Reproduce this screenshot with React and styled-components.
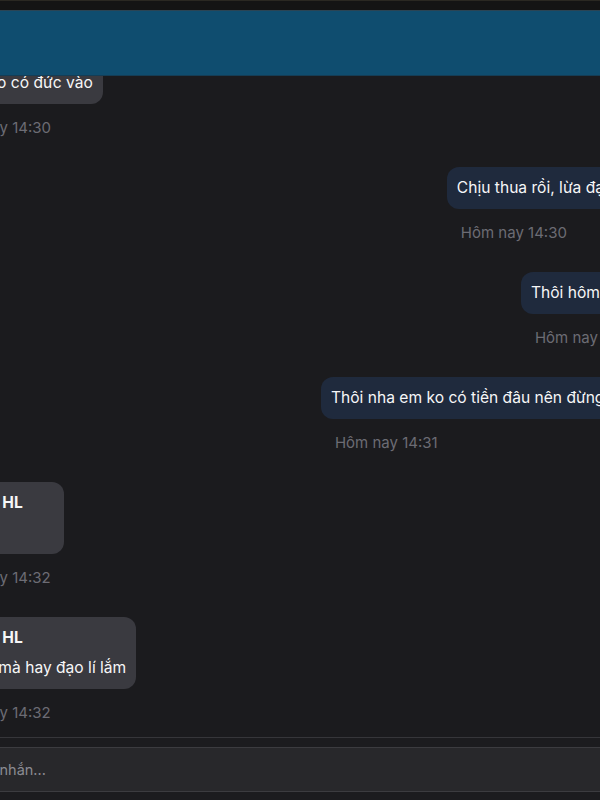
import React from 'react';
import styled, {createGlobalStyle} from 'styled-components';

const GlobalStyle = createGlobalStyle`
html, body {
    margin: 0;
    padding: 0;
    background: #1b1b1e;
    overflow: hidden;
}
body {
    font-family: Inter, "Noto Sans", sans-serif;
}
`;

const Panel = styled.div`
display: flex;
flex-direction: column;
width: 760px;
height: 800px;
margin-left: -85px;
background: #1b1b1e;
`;

const TopStrip = styled.div`
height: 10px;
background: #141414;
border-top: 1px solid #2a2822;
box-sizing: border-box;
`;

const Header = styled.header`
height: 66px;
flex-shrink: 0;
background: #0f4d6f;
border-top: 1px solid #2a4454;
border-bottom: 1px solid #153d55;
box-sizing: border-box;
`;

const MessageList = styled.div`
flex: 1;
min-height: 0;
overflow: hidden;
display: flex;
flex-direction: column;
justify-content: flex-end;
gap: 28.5px;
padding: 0 34px 14px 16px;
`;

const Group = styled.div`
display: flex;
flex-direction: column;
align-items: flex-start;
align-self: ${({ $mine }) => ($mine ? 'flex-end' : 'flex-start')};
flex-shrink: 0;
`;

const Bubble = styled.div`
background: ${({ $mine }) => ($mine ? '#1f2a3d' : '#3a3a40')};
color: #f6f6f7;
border-radius: 12px;
padding: 10px 10px;
font-size: 15.6px;
line-height: 22.5px;
min-width: ${({ $minWidth }) => ($minWidth ? `${$minWidth}px` : '0')};
box-sizing: border-box;
white-space: nowrap;
`;

const Name = styled.div`
font-weight: 700;
line-height: 22.5px;
margin-bottom: 7.5px;
margin-left: -2px;
`;

const Text = styled.div`
min-height: 22.5px;
`;

const Time = styled.div`
margin: 14px 0 0 14px;
font-size: 15px;
line-height: 20px;
color: #6c6c74;
`;

const Composer = styled.div`
flex-shrink: 0;
border-top: 1px solid #36363a;
background: #1c1c1f;
padding: 9px 12px 8px 12px;
`;

const Input = styled.input`
display: block;
width: 100%;
box-sizing: border-box;
height: 45px;
background: #28282b;
border: 1px solid #3c3c40;
border-radius: 6px;
padding: 0 12px 0 10px;
font-family: Inter, "Noto Sans", sans-serif;
font-size: 14.5px;
color: #f4f4f5;
outline: none;

&::placeholder {
    color: #8b8b92;
}
`;

const messages = [
    {mine: false, name: 'Nguyễn HL', text: 'Người ko có đức vào', time: 'Hôm nay 14:30'},
    {mine: true, text: 'Chịu thua rồi, lừa đạo ạ!', time: 'Hôm nay 14:30'},
    {mine: true, text: 'Thôi hôm nay', time: 'Hôm nay 14:30'},
    {mine: true, text: 'Thôi nha em ko có tiền đâu nên đừng lừa', time: 'Hôm nay 14:31'},
    {mine: false, name: 'Nguyễn HL', text: 'Ừ', time: 'Hôm nay 14:32', minWidth: 133},
    {mine: false, name: 'Nguyễn HL', text: 'Còn bé mà hay đạo lí lắm', time: 'Hôm nay 14:32'},
];

const App = () => {
    return (
        <>
        <GlobalStyle />
        <Panel>
            <TopStrip />
            <Header />
            <MessageList>
                {messages.map((m, i) => (
                    <Group key={i} $mine={m.mine}>
                        <Bubble $mine={m.mine} $minWidth={m.minWidth}>
                            {m.name && <Name>{m.name}</Name>}
                            <Text>{m.text}</Text>
                        </Bubble>
                        <Time>{m.time}</Time>
                    </Group>
                ))}
            </MessageList>
            <Composer>
                <Input placeholder="Nhập tin nhắn..." />
            </Composer>
        </Panel>
        </>
    )
}

export default App
